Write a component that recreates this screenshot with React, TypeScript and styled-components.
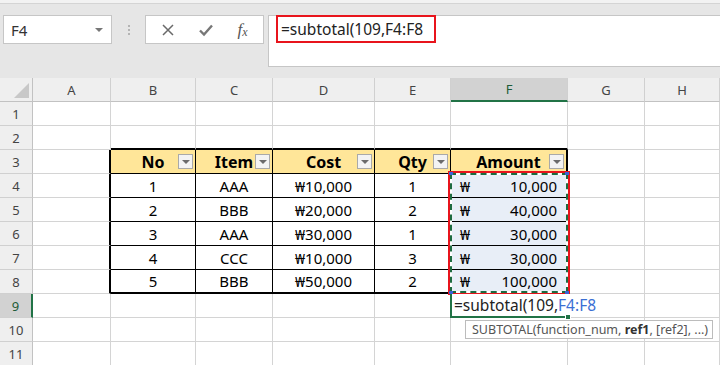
import React from "react";
import styled, { createGlobalStyle } from "styled-components";

const GlobalStyle = createGlobalStyle`
  html, body { margin: 0; padding: 0; background: #ffffff; }
  body { font-family: "Noto Sans", "Noto Sans CJK KR", sans-serif; overflow: hidden; }
`;

const GRID = "#d4d4d4";
const BLACK = "#000000";
const GREEN = "#217346";

const Window = styled.div`
  width: 720px;
  height: 365px;
  overflow: hidden;
  background: #fff;
`;

const Toolbar = styled.div`
  height: 78px;
  box-sizing: border-box;
  background: #e6e6e6;
  border-top: 3px solid #f2f2f2;
  box-shadow: inset 0 1px 0 #d4d4d4;
  display: flex;
  align-items: flex-start;
  padding: 12px 0 0 3px;
`;

const NameBox = styled.div`
  width: 109px;
  height: 29px;
  box-sizing: border-box;
  background: #fff;
  border: 1px solid #c6c6c6;
  display: flex;
  align-items: center;
  justify-content: space-between;
  padding: 0 8px 0 7px;
  font-size: 15px;
  color: #333;
`;

const Caret = styled.span`
  width: 0;
  height: 0;
  border-left: 4px solid transparent;
  border-right: 4px solid transparent;
  border-top: 4px solid #777;
`;

const Dots = styled.div`
  width: 33px;
  height: 29px;
  display: flex;
  flex-direction: column;
  align-items: center;
  justify-content: center;
  gap: 2px;
  span {
    width: 2px;
    height: 2px;
    background: #b4b4b4;
  }
`;

const Buttons = styled.div`
  width: 119px;
  height: 29px;
  box-sizing: border-box;
  background: #fff;
  border: 1px solid #c6c6c6;
  display: flex;
  align-items: center;
  justify-content: space-around;
  padding: 0 4px;
`;

const Fx = styled.span`
  font-family: "Liberation Serif", serif;
  font-style: italic;
  font-size: 17px;
  color: #555;
  sub { font-size: 12px; vertical-align: -1px; }
`;

const FormulaBox = styled.div`
  margin-left: 4px;
  flex: 1;
  height: 52px;
  box-sizing: border-box;
  background: #fff;
  border: 1px solid #c6c6c6;
  border-right: none;
  padding: 0 0 0 8px;
`;

const Highlight = styled.div`
  display: inline-flex;
  align-items: center;
  height: 28px;
  box-sizing: border-box;
  border: 2px solid #e8141c;
  padding: 0 11px 0 3px;
  font-size: 15.5px;
  color: #222;
  position: relative;
  top: -1px;
  left: -1px;
`;

const Sheet = styled.div`
  position: relative;
  display: grid;
  grid-template-columns: 33px 78px 85px 77px 102px 76px 117px 77px 1fr;
  grid-auto-rows: 24px;
`;

const ColHead = styled.div<{ $active?: boolean }>`
  box-sizing: border-box;
  background: ${(p) => (p.$active ? "#d2d2d2" : "#efefef")};
  border-right: 1px solid #d0d0d0;
  border-bottom: ${(p) => (p.$active ? `2px solid ${GREEN}` : "1px solid #c2c2c2")};
  display: flex;
  align-items: center;
  justify-content: center;
  font-size: 13px;
  color: ${(p) => (p.$active ? "#1e5c38" : "#444")};
`;

const Corner = styled.div`
  box-sizing: border-box;
  background: #efefef;
  border-right: 1px solid #c2c2c2;
  border-bottom: 1px solid #c2c2c2;
  display: flex;
  align-items: flex-end;
  justify-content: flex-end;
  padding: 0 3px 3px 0;
  span {
    width: 0;
    height: 0;
    border-left: 15px solid transparent;
    border-bottom: 15px solid #c8c8c8;
  }
`;

const RowHead = styled.div<{ $active?: boolean }>`
  box-sizing: border-box;
  background: ${(p) => (p.$active ? "#d2d2d2" : "#efefef")};
  border-right: ${(p) => (p.$active ? `2px solid ${GREEN}` : "1px solid #c2c2c2")};
  border-bottom: 1px solid #d0d0d0;
  display: flex;
  align-items: center;
  justify-content: center;
  font-size: 13px;
  color: ${(p) => (p.$active ? "#1e5c38" : "#444")};
`;

const Cell = styled.div<{
  $bg?: string;
  $right: string;
  $bottom: string;
  $bold?: boolean;
}>`
  position: relative;
  box-sizing: border-box;
  background: ${(p) => p.$bg || "#fff"};
  border-right: ${(p) => p.$right};
  border-bottom: ${(p) => p.$bottom};
  display: flex;
  align-items: center;
  justify-content: center;
  font-size: ${(p) => (p.$bold ? "16px" : "15px")};
  font-weight: ${(p) => (p.$bold ? 700 : 400)};
  color: #000;
  white-space: nowrap;
`;

const Accounting = styled.div`
  width: 100%;
  display: flex;
  justify-content: space-between;
  padding: 0 9px 0 9px;
  box-sizing: border-box;
`;

const FilterButton = styled.span`
  position: absolute;
  right: 2px;
  top: 4px;
  width: 15px;
  height: 15px;
  box-sizing: border-box;
  background: #f3f3f3;
  border: 1px solid #a9a9a9;
  display: flex;
  align-items: center;
  justify-content: center;
  &::after {
    content: "";
    border-left: 4px solid transparent;
    border-right: 4px solid transparent;
    border-top: 4px solid #6b6b6b;
  }
`;

const RedFrame = styled.div`
  position: absolute;
  left: 448px;
  top: 93px;
  width: 122px;
  height: 124px;
  box-sizing: border-box;
  border: 2px solid #e8141c;
  pointer-events: none;
`;

const Marquee = styled.div`
  position: absolute;
  inset: 0;
  border: 2px solid #ffffff;
  &::after {
    content: "";
    position: absolute;
    inset: -2px;
    border: 2px dashed #1d6b40;
  }
`;

const RefCorner = styled.span<{ $x: "left" | "right"; $y: "top" | "bottom" }>`
  position: absolute;
  ${(p) => p.$x}: -1px;
  ${(p) => p.$y}: -1px;
  width: 4px;
  height: 3px;
  background: #3a62d6;
  z-index: 2;
`;

const Editor = styled.div`
  position: absolute;
  left: 450px;
  top: 215px;
  width: 118px;
  height: 25px;
  box-sizing: border-box;
  border-left: 2px solid ${GREEN};
  border-bottom: 2px solid ${GREEN};
  &::after {
    content: "";
    position: absolute;
    right: -3px;
    bottom: -4px;
    width: 6px;
    height: 6px;
    background: ${GREEN};
    border: 1px solid #fff;
    box-sizing: border-box;
  }
`;

const EditText = styled.div`
  position: absolute;
  left: 0;
  top: 1px;
  height: 21px;
  width: 150px;
  background: #fff;
  display: flex;
  align-items: center;
  padding-left: 2px;
  font-size: 15.5px;
  color: #222;
  white-space: nowrap;
  span { color: #3b6fd4; }
`;

const Tip = styled.div`
  position: absolute;
  left: 465px;
  top: 242px;
  height: 19px;
  box-sizing: border-box;
  background: #fff;
  border: 1px solid #bcbcbc;
  display: flex;
  align-items: center;
  padding: 0 4px 0 6px;
  font-size: 12.5px;
  color: #555;
  white-space: nowrap;
  b { color: #333; }
`;

const COLS = ["A", "B", "C", "D", "E", "F", "G", "H"];
const ROWS = 11;

type Value = { text?: string; money?: string; filter?: boolean };

const header = ["No", "Item", "Cost", "Qty", "Amount"];
const data: [string, string, string, string, string][] = [
  ["1", "AAA", "₩10,000", "1", "10,000"],
  ["2", "BBB", "₩20,000", "2", "40,000"],
  ["3", "AAA", "₩30,000", "1", "30,000"],
  ["4", "CCC", "₩10,000", "3", "30,000"],
  ["5", "BBB", "₩50,000", "2", "100,000"],
];

// columns B..F = 1..5, rows 3..8
const inTable = (c: number, r: number) => c >= 1 && c <= 5 && r >= 3 && r <= 8;

function borders(c: number, r: number) {
  let right = `1px solid ${GRID}`;
  let bottom = `1px solid ${GRID}`;
  if (inTable(c, r)) {
    right = c === 5 ? `2px solid ${BLACK}` : `1px solid ${BLACK}`;
    bottom = r === 8 ? `2px solid ${BLACK}` : `1px solid ${BLACK}`;
  }
  if (c === 0 && r >= 3 && r <= 8) right = `2px solid ${BLACK}`;
  if (r === 2 && c >= 1 && c <= 5) bottom = `2px solid ${BLACK}`;
  return { right, bottom };
}

function valueAt(c: number, r: number): Value {
  if (r === 3 && c >= 1 && c <= 5) return { text: header[c - 1], filter: true };
  if (r >= 4 && r <= 8 && c >= 1 && c <= 5) {
    const v = data[r - 4][c - 1];
    if (c === 5) return { money: v };
    return { text: v };
  }
  return {};
}

function Check() {
  return (
    <svg width="16" height="14" viewBox="0 0 16 14">
      <path d="M2 7.5 L6 11.5 L14 2.5" fill="none" stroke="#777" strokeWidth="2.4" />
    </svg>
  );
}

function Cross() {
  return (
    <svg width="14" height="14" viewBox="0 0 14 14">
      <path d="M2 2 L12 12 M12 2 L2 12" fill="none" stroke="#6a6a6a" strokeWidth="1.5" />
    </svg>
  );
}

export default function App() {
  const cells: React.ReactNode[] = [];
  cells.push(
    <Corner key="corner">
      <span />
    </Corner>
  );
  COLS.forEach((l) =>
    cells.push(
      <ColHead key={l} $active={l === "F"}>
        {l}
      </ColHead>
    )
  );
  for (let r = 1; r <= ROWS; r++) {
    cells.push(
      <RowHead key={`r${r}`} $active={r === 9}>
        {r}
      </RowHead>
    );
    COLS.forEach((_, c) => {
      const { right, bottom } = borders(c, r);
      const v = valueAt(c, r);
      const bg =
        r === 3 && c >= 1 && c <= 5 ? "#ffe699" : c === 5 && r >= 4 && r <= 8 ? "#e8eef7" : undefined;
      cells.push(
        <Cell key={`${c}-${r}`} $bg={bg} $right={right} $bottom={bottom} $bold={r === 3 && !!v.text}>
          {v.text}
          {v.money && (
            <Accounting>
              <span>₩</span>
              <span>{v.money}</span>
            </Accounting>
          )}
          {v.filter && <FilterButton />}
        </Cell>
      );
    });
  }

  return (
    <Window>
      <GlobalStyle />
      <Toolbar>
        <NameBox>
          F4
          <Caret />
        </NameBox>
        <Dots>
          <span />
          <span />
          <span />
        </Dots>
        <Buttons>
          <Cross />
          <Check />
          <Fx>
            f<sub>x</sub>
          </Fx>
        </Buttons>
        <FormulaBox>
          <Highlight>=subtotal(109,F4:F8</Highlight>
        </FormulaBox>
      </Toolbar>
      <Sheet>
        {cells}
        <RedFrame>
          <Marquee />
          <RefCorner $x="left" $y="top" />
          <RefCorner $x="right" $y="top" />
          <RefCorner $x="left" $y="bottom" />
          <RefCorner $x="right" $y="bottom" />
        </RedFrame>
        <Editor>
          <EditText>
            =subtotal(109,<span>F4:F8</span>
          </EditText>
        </Editor>
        <Tip>
          SUBTOTAL(function_num,&nbsp;<b>ref1</b>, [ref2], ...)
        </Tip>
      </Sheet>
    </Window>
  );
}
